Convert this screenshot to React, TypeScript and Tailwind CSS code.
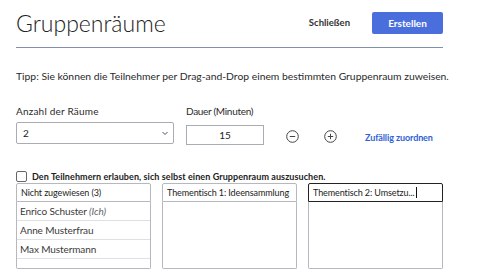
import React from "react";

const font = { fontFamily: "Lato, 'Open Sans', sans-serif" };

function Column({ title, focused, items }: { title: string; focused?: boolean; items?: React.ReactNode[] }) {
  return (
    <div className="flex w-[135px] flex-col">
      <div
        className={
          "flex h-[19px] items-center rounded-t-[2px] border px-[4px] text-[9px] tracking-[-0.1px] text-[#222] " +
          (focused ? "border-[#222]" : "border-[#b5b9bf]")
        }
      >
        <span className="whitespace-nowrap">{title}</span>
        {focused && <span className="ml-[1px] h-[11px] w-[1px] bg-[#111]" />}
      </div>
      <div className="flex h-[67px] flex-col rounded-b-[2px] border border-t-0 border-[#b5b9bf]">
        {(items || []).map((it, i) => (
          <div key={i} className="flex h-[19px] items-center border-b border-[#dde0e4] px-[3px] text-[10px] tracking-[-0.1px] text-[#3a3a3a]">
            {it}
          </div>
        ))}
      </div>
    </div>
  );
}

export default function App() {
  return (
    <div className="h-[277px] w-[478px] bg-white px-[16px] text-[#333]" style={font}>
      <div className="w-[427px]">
        <div className="flex items-center justify-between pt-[12px]">
          <h1 className="text-[23px] font-light leading-[22px] text-[#222]">Gruppenräume</h1>
          <div className="flex items-center">
            <button className="mr-[22px] text-[9.5px] font-bold text-[#333]">Schließen</button>
            <button className="h-[22px] w-[71px] rounded-[2px] bg-[#4a6fdc] text-[10px] font-bold text-white">
              Erstellen
            </button>
          </div>
        </div>
        <div className="mt-[13px] h-[1px] bg-[#8391a8]" />
        <p className="mt-[21px] whitespace-nowrap text-[10.35px] leading-[14px] text-[#2a2a2a]">
          Tipp: Sie können die Teilnehmer per Drag-and-Drop einem bestimmten Gruppenraum zuweisen.
        </p>
        <div className="mt-[21px] flex items-start">
          <div className="flex w-[158px] flex-col">
            <label className="text-[10px] leading-[14px] tracking-[0.2px] text-[#2a2a2a]">Anzahl der Räume</label>
            <div className="mt-[4px] flex h-[22px] items-center justify-between rounded-[2px] border border-[#a9adb3] pl-[6px] pr-[4px] text-[10px] text-[#222]">
              <span>2</span>
              <svg width="8" height="8" viewBox="0 0 8 8" fill="none" stroke="#555" strokeWidth="1">
                <path d="M1.5 3l2.5 2.5L6.5 3" />
              </svg>
            </div>
          </div>
          <div className="ml-[12px] flex w-[78px] flex-col">
            <label className="whitespace-nowrap text-[10px] leading-[14px] tracking-[-0.3px] text-[#2a2a2a]">Dauer (Minuten)</label>
            <div className="mt-[7px] flex h-[20px] items-center justify-center border border-[#a9adb3] text-[10px] text-[#222]">
              15
            </div>
          </div>
          <div className="ml-[22px] mt-[24px] flex items-center">
            <svg width="13" height="13" viewBox="0 0 13 13" fill="none" stroke="#444" strokeWidth="1">
              <circle cx="6.5" cy="6.5" r="5.8" />
              <path d="M3.8 6.5h5.4" />
            </svg>
            <svg className="ml-[25px]" width="13" height="13" viewBox="0 0 13 13" fill="none" stroke="#444" strokeWidth="1">
              <circle cx="6.5" cy="6.5" r="5.8" />
              <path d="M3.8 6.5h5.4M6.5 3.8v5.4" />
            </svg>
            <a className="ml-[28px] mt-[3px] whitespace-nowrap text-[9px] font-bold tracking-[-0.1px] text-[#2f5fd6]">Zufällig zuordnen</a>
          </div>
        </div>
        <div className="mt-[26px] flex items-center">
          <span className="h-[11px] w-[11px] rounded-[2px] border border-[#666]" />
          <span className="ml-[5px] whitespace-nowrap text-[9px] font-bold leading-[11px] tracking-[0.08px] text-[#222]">
            Den Teilnehmern erlauben, sich selbst einen Gruppenraum auszusuchen.
          </span>
        </div>
        <div className="mt-[1px] flex gap-[11px]">
          <Column
            title="Nicht zugewiesen (3)"
            items={[
              <span>
                Enrico Schuster <i className="text-[#666]">(Ich)</i>
              </span>,
              <span>Anne Musterfrau</span>,
              <span>Max Mustermann</span>,
            ]}
          />
          <Column title="Thementisch 1: Ideensammlung" />
          <Column title="Thementisch 2: Umsetzu..." focused />
        </div>
      </div>
    </div>
  );
}
